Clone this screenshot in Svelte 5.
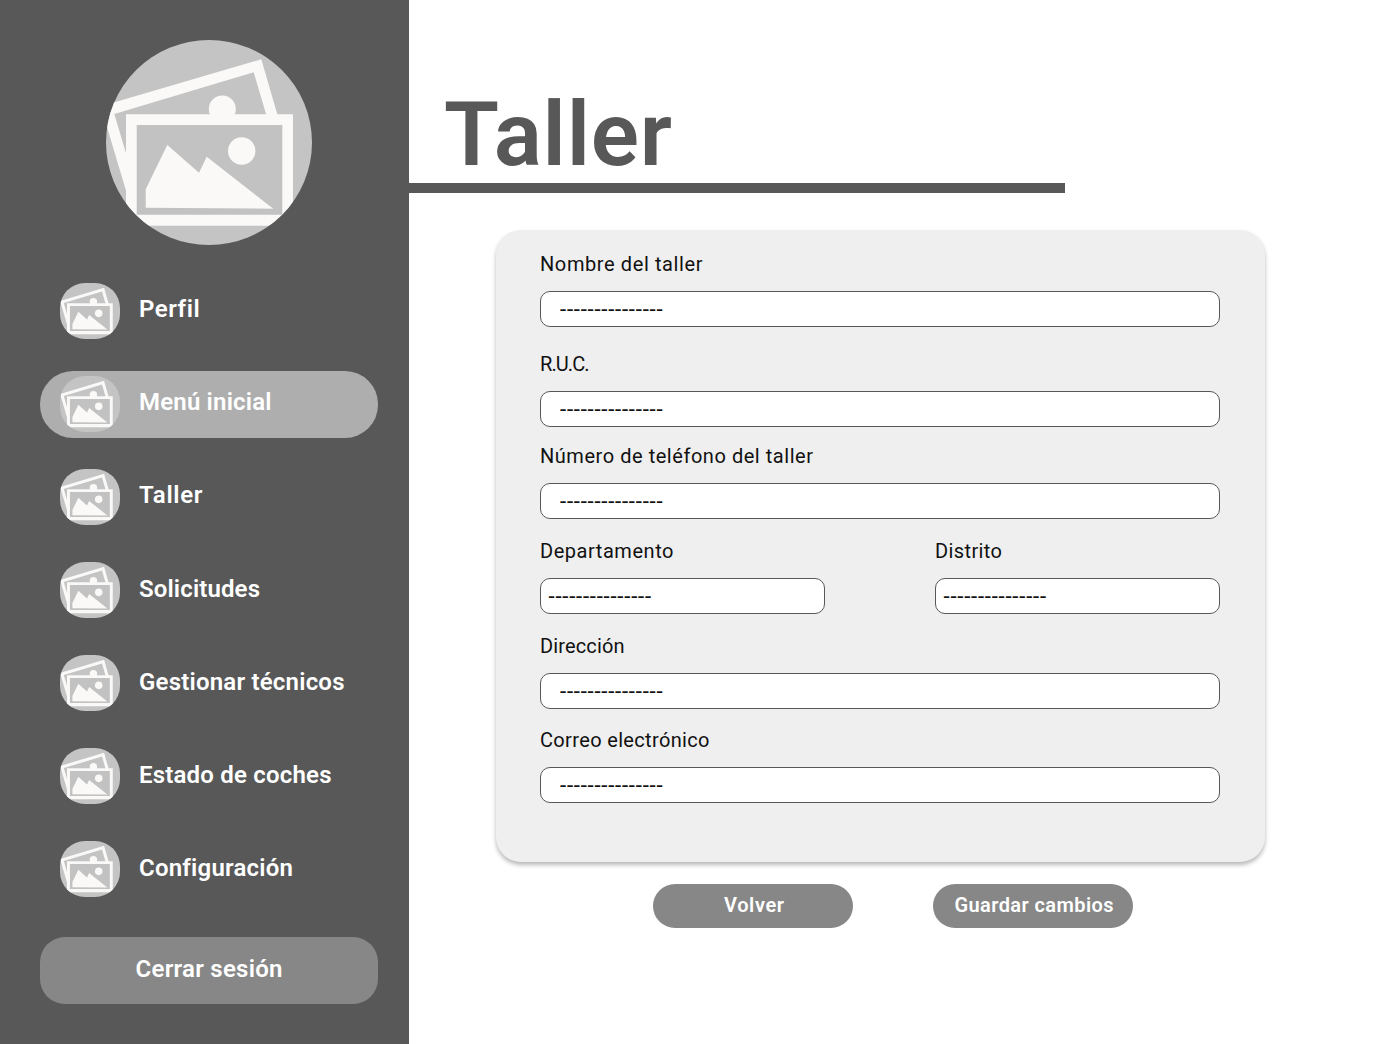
<script>
  const menu = [
    { label: 'Perfil', width: 60 },
    { label: 'Menú inicial', width: 132.5, active: true },
    { label: 'Taller', width: 63.5 },
    { label: 'Solicitudes', width: 121, low: true },
    { label: 'Gestionar técnicos', width: 205.5, low: true },
    { label: 'Estado de coches', width: 192.5, low: true },
    { label: 'Configuración', width: 153.5, low: true }
  ];

  const rows = [
    { gap: 25, fields: [{ label: 'Nombre del taller', width: 162.5 }] },
    { gap: 17, fields: [{ label: 'R.U.C.', width: 49.5 }] },
    { gap: 20, fields: [{ label: 'Número de teléfono del taller', width: 273 }] },
    {
      gap: 20,
      fields: [
        { label: 'Departamento', width: 133.5 },
        { label: 'Distrito', width: 67 }
      ]
    },
    { gap: 19, fields: [{ label: 'Dirección', width: 84.5 }] },
    { gap: 0, fields: [{ label: 'Correo electrónico', width: 169.5 }] }
  ];

  const blank = '---------------';

  // Tracks the text so that it spans the given width.
  function fit(node, width) {
    const natural = node.getBoundingClientRect().width;
    const spacing = (width - natural) / (node.textContent.length - 1);
    node.style.letterSpacing = `${spacing}px`;
    node.style.marginRight = `${-spacing}px`;
  }
</script>

{#snippet photos(viewBox)}
  <svg {viewBox} preserveAspectRatio="none" aria-hidden="true">
    <g fill="#faf9f8">
      <path
        fill-rule="evenodd"
        d="M-5.2 66.3 155.3 19.3 184 118 24 164ZM8.3 74 147.7 32.3 170 108 28 140Z"
      />
      <circle cx="116.3" cy="69" r="13.5" />
      <path d="M20 74.3H187V185.7H20Z" />
    </g>
    <path fill="#c2c2c2" d="M30.7 85H176.3V174.7H30.7Z" />
    <g fill="#faf9f8">
      <circle cx="135.7" cy="111" r="13.7" />
      <path d="M39.7 149.3 61.3 105 93 132.7 100.7 116.7 167.3 168.7 39.7 167.7Z" />
    </g>
  </svg>
{/snippet}

<div class="page">
  <aside>
    <div class="avatar">{@render photos('0 0 206 205')}</div>
    <nav>
      {#each menu as item}
        <a class="item" class:active={item.active} class:low={item.low}>
          <span class="thumb">{@render photos('-5.6 2 219 201')}</span>
          <span class="text" use:fit={item.width}>{item.label}</span>
        </a>
      {/each}
    </nav>
    <button class="logout"><span class="text" use:fit={147}>Cerrar sesión</span></button>
  </aside>

  <main>
    <header>
      <h1><span class="text" use:fit={228}>Taller</span></h1>
    </header>

    <section class="card">
      {#each rows as row}
        <div class="row" style:margin-bottom="{row.gap}px">
          {#each row.fields as field}
            <div class="field" class:half={row.fields.length > 1}>
              <div class="label"><span class="text" use:fit={field.width}>{field.label}</span></div>
              <div class="box"><span class="text" use:fit={103.5}>{blank}</span></div>
            </div>
          {/each}
        </div>
      {/each}
    </section>

    <div class="actions">
      <button><span class="text" use:fit={60}>Volver</span></button>
      <button><span class="text" use:fit={159}>Guardar cambios</span></button>
    </div>
  </main>
</div>

<style>
  :global(body) {
    margin: 0;
    background: #fff;
  }

  .page {
    display: flex;
    width: 1379px;
    height: 1044px;
    overflow: hidden;
    font-family: Roboto, 'Open Sans', sans-serif;
  }

  .text {
    display: inline-block;
    white-space: nowrap;
  }

  button {
    display: flex;
    justify-content: center;
    border: 0;
    padding: 0;
    color: #fff;
    background: #878787;
    font-family: inherit;
    font-weight: 600;
  }

  svg {
    display: block;
    width: 100%;
    height: 100%;
  }

  aside {
    box-sizing: border-box;
    width: 409px;
    flex: none;
    padding: 40px 31px 0 40px;
    background: #585858;
  }

  .avatar {
    width: 206px;
    height: 205px;
    margin: 0 auto;
    border-radius: 50%;
    overflow: hidden;
    background: #c4c4c4;
  }

  nav {
    display: flex;
    flex-direction: column;
    gap: 26px;
    margin-top: 33px;
  }

  .item {
    display: flex;
    align-items: flex-start;
    gap: 19px;
    box-sizing: border-box;
    height: 67px;
    padding: 5px 20px;
    border-radius: 33px;
    color: #fff;
    font-size: 24px;
    font-weight: 600;
    line-height: 52px;
  }

  .low {
    line-height: 54px;
  }

  .active {
    background: #aeaeae;
  }

  .thumb {
    width: 60px;
    height: 56px;
    flex: none;
    border-radius: 25px;
    overflow: hidden;
    background: #c4c4c4;
  }

  .logout {
    width: 338px;
    height: 67px;
    margin-top: 34px;
    border-radius: 25px;
    font-size: 24px;
    line-height: 64px;
  }

  main {
    flex: 1;
  }

  header {
    box-sizing: border-box;
    width: 656px;
    height: 193px;
    padding: 81px 0 0 35px;
    border-bottom: 10px solid #585858;
  }

  h1 {
    margin: 0;
    color: #585858;
    font-size: 89.6px;
    font-weight: 600;
    line-height: 108px;
  }

  .card {
    box-sizing: border-box;
    width: 769px;
    height: 632px;
    margin: 37px 0 0 87px;
    padding: 22px 45px 0 44px;
    border-radius: 25px;
    background: #efefef;
    box-shadow: 0 3px 4px rgba(0, 0, 0, 0.28);
  }

  .row {
    display: flex;
    justify-content: space-between;
  }

  .field {
    width: 680px;
  }

  .half {
    width: 285px;
  }

  .label {
    height: 39px;
    font-size: 20px;
    line-height: 24px;
    color: #111;
  }

  .box {
    box-sizing: border-box;
    height: 36px;
    padding-left: 18.5px;
    border: 1px solid #585858;
    border-radius: 10px;
    background: #fff;
    color: #111;
    font-family: 'Noto Sans', sans-serif;
    font-size: 22px;
    line-height: 31px;
  }

  .half .box {
    padding-left: 7px;
  }

  .actions {
    display: flex;
    gap: 80px;
    margin: 22px 0 0 244px;
  }

  .actions button {
    box-sizing: border-box;
    width: 200px;
    height: 44px;
    padding-left: 2px;
    border-radius: 22px;
    font-size: 20px;
    line-height: 42px;
  }
</style>
